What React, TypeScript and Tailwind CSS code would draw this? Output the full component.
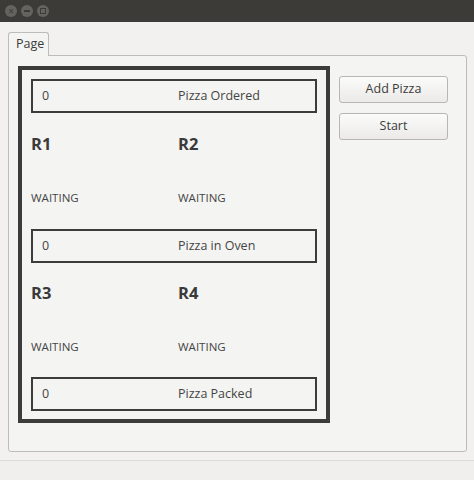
import React from "react";

const font = { fontFamily: '"Open Sans", "DejaVu Sans", sans-serif' };

function Counter({ label }: { label: string }) {
  return (
    <div className="flex h-[34px] items-center border-2 border-[#3c3c3c] pl-[9px] text-[12.5px] text-[#444]">
      <span className="w-[136px]">0</span>
      <span>{label}</span>
    </div>
  );
}

function Robots({ a, b, top, mid, gap }: { a: string; b: string; top: string; mid: string; gap: string }) {
  return (
    <div className={gap}>
      <div className={`flex items-center ${top} text-[#3a3a3a]`}>
        <span className="w-[147px] text-[16.5px] font-bold">{a}</span>
        <span className="text-[16.5px] font-bold">{b}</span>
      </div>
      <div className={`flex items-center ${mid} text-[11.5px] text-[#444]`}>
        <span className="w-[147px]">WAITING</span>
        <span>WAITING</span>
      </div>
    </div>
  );
}

export default function App() {
  return (
    <div className="flex h-[480px] w-[474px] flex-col bg-[#f2f1f0] text-[#3c3c3c]" style={font}>
      {/* title bar */}
      <div className="flex h-[22px] items-center gap-[4px] bg-[#3c3b37] pl-[5px]">
        <div className="flex h-[12px] w-[12px] items-center justify-center rounded-full bg-[#64635f] text-[10px] leading-none text-[#3c3b37]">×</div>
        <div className="flex h-[12px] w-[12px] items-center justify-center rounded-full bg-[#64635f]">
          <div className="h-[2px] w-[6px] bg-[#3c3b37]" />
        </div>
        <div className="flex h-[12px] w-[12px] items-center justify-center rounded-full bg-[#64635f]">
          <div className="h-[6px] w-[6px] border border-[#3c3b37]" />
        </div>
      </div>

      <div className="flex-1 px-[8px] pt-[10px]">
        <div className="relative z-10 -mb-px flex h-[24px] w-[41px] items-center rounded-t-[3px] border border-b-0 border-[#bdbcb8] bg-[#f4f4f2] pl-[7px] text-[12.5px]">
          Page
        </div>
        <div className="flex h-[397px] w-[459px] rounded-b-[3px] rounded-tr-[3px] border border-[#bdbcb8] bg-[#f4f4f2] pl-[9px] pt-[10px]">
          <div className="flex h-[357px] w-[312px] flex-col border-4 border-[#3c3c3c] px-[9px] pt-[9px]">
            <Counter label="Pizza Ordered" />
            <Robots a="R1" b="R2" top="h-[62px]" mid="h-[46px]" gap="mb-[8px]" />
            <Counter label="Pizza in Oven" />
            <Robots a="R3" b="R4" top="h-[60px]" mid="h-[48px]" gap="mb-[6px]" />
            <Counter label="Pizza Packed" />
          </div>
          <div className="ml-[9px] flex flex-col gap-[10px] pt-[10px]">
            <button className="h-[27px] w-[109px] rounded-[3px] border border-[#b7b6b2] bg-gradient-to-b from-[#fbfbfa] to-[#ebeae8] text-[12.5px] text-[#3c3c3c]">
              Add Pizza
            </button>
            <button className="h-[27px] w-[109px] rounded-[3px] border border-[#b7b6b2] bg-gradient-to-b from-[#fbfbfa] to-[#ebeae8] text-[12.5px] text-[#3c3c3c]">
              Start
            </button>
          </div>
        </div>
      </div>

      <div className="h-[20px] border-t border-[#dcdbd8] bg-[#f0efed]" />
    </div>
  );
}
